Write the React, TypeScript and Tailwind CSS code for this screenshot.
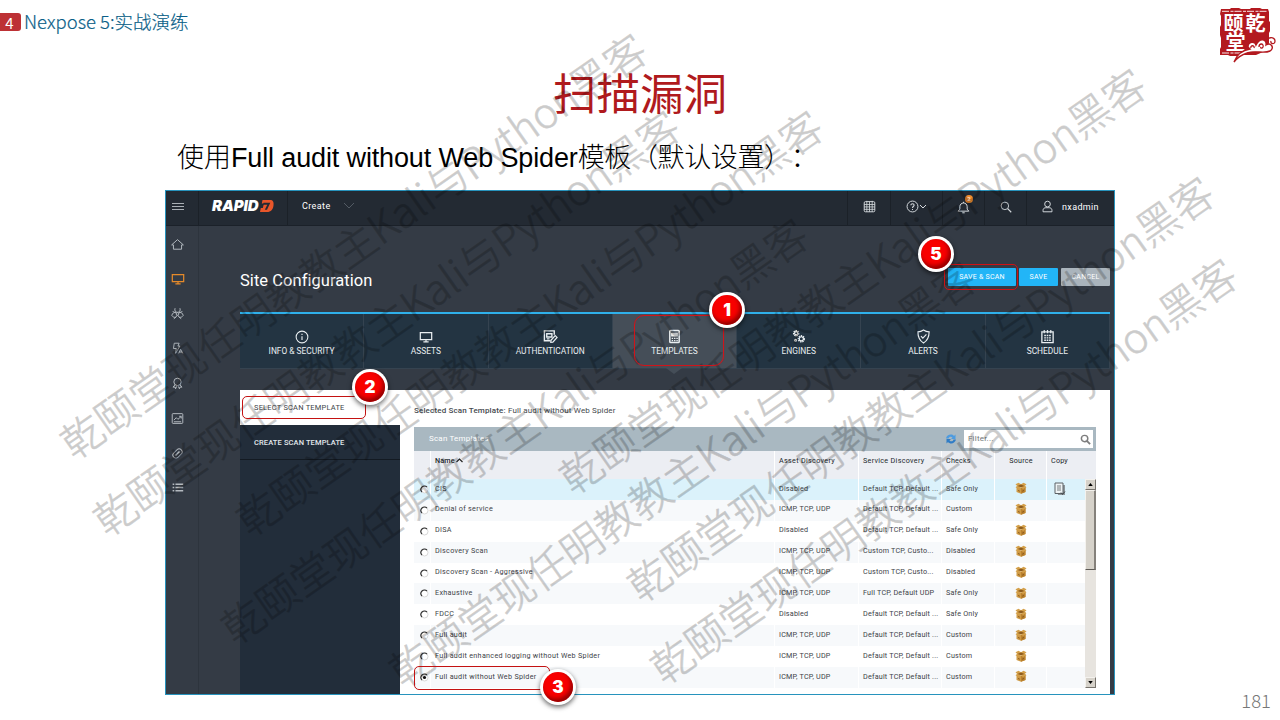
import React from "react";

type P = { children?: React.ReactNode; className?: string };

const Svg = ({ children, className = "" }: P) => (
  <svg viewBox="0 0 16 16" fill="none" stroke="currentColor" strokeWidth="1.2" className={`shrink-0 ${className}`}>
    {children}
  </svg>
);

const HomeIcon = () => (
  <Svg className="size-[13px]"><path d="M.8 8.500 8 2l7.200 6.500H13v5.300H3V8.500z" /></Svg>
);
const MonitorIcon = ({ className = "size-[14px]" }: P) => (
  <Svg className={className}><path d="M1.500 3h13v8h-13zM8 11v2.500M5 13.500h6" strokeWidth="1.400" /></Svg>
);
const BiohazardIcon = () => (
  <Svg className="size-[13px]">
    <circle cx="8" cy="8.500" r="1.600" />
    <path d="M5 1.500C4 4.500 5.500 6.500 8 6.500s4-2 3-5M1 10.500c.5-3 3-4.500 5.500-3.500M1 10.500c2.500 3.500 6 2.500 6.500-.5M15 10.500c-.5-3-3-4.500-5.500-3.500M15 10.500c-2.500 3.500-6 2.500-6.500-.5M3.500 14.500 6.500 12M12.500 14.500 9.500 12M2 5.500 5.500 7M14 5.500 10.500 7" />
  </Svg>
);
const BoltIcon = () => (
  <Svg className="size-[13px]"><path d="M4 1.500h6L8.500 5H11l-5.500 9 1-6H3zM9.500 14l2.300-5 2.700 5M10.500 12.300h3" strokeWidth="1.100" /></Svg>
);
const BadgeIcon = () => (
  <Svg className="size-[13px]">
    <circle cx="8" cy="6" r="4.500" />
    <path d="M5 9.500 2.500 12.500l2.500-.2.600 2.200L7 11.500M11 9.500l2.500 3-2.500-.2-.6 2.200L9 11.500" />
  </Svg>
);
const ReportIcon = () => (
  <Svg className="size-[13px]"><rect x="1.500" y="2" width="13" height="12" rx="1" /><path d="m3.500 10 3-3 2 2 4-3.500M10 5.300h2.600V8M3.500 12h9" /></Svg>
);
const ClipIcon = () => (
  <Svg className="size-[13px]">
    <g transform="rotate(-45 8 8)"><rect x="1.500" y="4.300" width="13" height="7.400" rx="3.700" /><path d="M4.500 8h7" strokeWidth="2" /></g>
  </Svg>
);
const ListIcon = () => (
  <Svg className="size-[13px]"><path d="M2 4h2M2 8h2M2 12h2M5.500 4H15M5.500 8H15M5.500 12H15" strokeWidth="1.700" /></Svg>
);
const InfoIcon = () => (
  <Svg className="size-[14px]"><circle cx="8" cy="8" r="6.700" /><path d="M8 7v4.500M8 4.300v1.400" strokeWidth="1.300" /></Svg>
);
const AuthIcon = () => (
  <Svg className="size-[15px]">
    <path d="M12 6V2H1.500v10.500H8M4 5h5.500v3.500H4zM4 10.500h3" strokeWidth="1.500" />
    <path d="m8.500 12 4.500-5 2 2-4.500 5-2.200.3z" strokeWidth="1.300" />
  </Svg>
);
const TemplateIcon = () => (
  <Svg className="size-[15px]">
    <rect x="3" y="1.500" width="10" height="13" rx="1" strokeWidth="1.600" />
    <path d="M5 4.500h6v3H5z" fill="currentColor" /><path d="M5 10h1.500M7.500 10H9M10 10h1.500M5 12.300h1.500M7.500 12.300H9M10 12.300h1.500" strokeWidth="1.400" />
  </Svg>
);
const EnginesIcon = () => (
  <Svg className="size-[15px]">
    <circle cx="5.500" cy="4.500" r="2.500" strokeWidth="1.900" strokeDasharray="1.300 .7" /><circle cx="5.500" cy="4.500" r="1.700" />
    <circle cx="11" cy="10.500" r="3" strokeWidth="2" strokeDasharray="1.400 .8" /><circle cx="11" cy="10.500" r="2.200" />
    <circle cx="5" cy="12" r="1" />
  </Svg>
);
const ShieldIcon = () => (
  <Svg className="size-[15px]"><path d="M8 1c2 1.500 4 2 6 2 0 5.500-1 9-6 12-5-3-6-6.500-6-12 2 0 4-.5 6-2z" /><path d="m5.300 7.500 2 2.200 3.800-4" /></Svg>
);
const ScheduleIcon = () => (
  <Svg className="size-[15px]">
    <path d="M2 3h12v11.500H2z" strokeWidth="1.400" />
    <path d="M4.500 1v3.500M8 1v3.500M11.500 1v3.500" strokeWidth="1.300" />
    <path d="M4.500 7h7M4.500 9.500h7M4.500 12h7" strokeWidth="1.500" strokeDasharray="1.800 .8" />
  </Svg>
);
const CalendarIcon = () => (
  <Svg className="size-[13px]"><rect x="1.500" y="2" width="13" height="12.500" rx="1.500" /><path d="M1.500 5.500h13M1.500 8.500h13M1.500 11.500h13M4.700 1v13.500M8 2v12.500M11.300 1v13.500" strokeWidth="1" /></Svg>
);

const BoxIcon = () => (
  <svg viewBox="0 0 12 12" className="size-[12px]">
    <path d="M1.500 4.500 6 6l4.500-1.500V10L6 11.700 1.500 10z" fill="#cf9a45" />
    <path d="M6 6v5.700L10.500 10V4.500z" fill="#bb822f" />
    <path d="M.5 2.300 3.500.8 6 2.300 8.500.8l3 1.500L9.800 4 11.500 5.300 8 7 6 5.200 4 7 .5 5.300 2.200 4z" fill="#d4a04a" />
    <path d="M2.500 3.900 6 2.400l3.500 1.500L6 5.200z" fill="#8d5c1e" />
    <path d="M3 8.500 4.800 9.200M7.200 9.200 9 8.500" stroke="#7a4d17" strokeWidth=".8" />
  </svg>
);

const CopyIcon = () => (
  <svg viewBox="0 0 12 14" className="h-[14px] w-[12px]" fill="none">
    <path d="M3 3h8v10H4z" fill="#8d9499" />
    <path d="M1 1h8v10.500H1z" fill="#eef3f5" stroke="#5c6266" />
    <path d="M3 4h4M3 6h4M3 8h4" stroke="#666d71" strokeWidth=".9" />
    <path d="m7 10.500 1.500 2 2.500-3" stroke="#454b4f" />
  </svg>
);

const sidebar = [HomeIcon, MonitorIcon, BiohazardIcon, BoltIcon, BadgeIcon, ReportIcon, ClipIcon, ListIcon];

const tabs: [string, React.ComponentType][] = [
  ["INFO & SECURITY", InfoIcon],
  ["ASSETS", MonitorIcon],
  ["AUTHENTICATION", AuthIcon],
  ["TEMPLATES", TemplateIcon],
  ["ENGINES", EnginesIcon],
  ["ALERTS", ShieldIcon],
  ["SCHEDULE", ScheduleIcon],
];

const rows = [
  ["CIS", "Disabled", "Default TCP, Default ...", "Safe Only"],
  ["Denial of service", "ICMP, TCP, UDP", "Default TCP, Default ...", "Custom"],
  ["DISA", "Disabled", "Default TCP, Default ...", "Safe Only"],
  ["Discovery Scan", "ICMP, TCP, UDP", "Custom TCP, Custo...", "Disabled"],
  ["Discovery Scan - Aggressive", "ICMP, TCP, UDP", "Custom TCP, Custo...", "Disabled"],
  ["Exhaustive", "ICMP, TCP, UDP", "Full TCP, Default UDP", "Safe Only"],
  ["FDCC", "Disabled", "Default TCP, Default ...", "Safe Only"],
  ["Full audit", "ICMP, TCP, UDP", "Default TCP, Default ...", "Custom"],
  ["Full audit enhanced logging without Web Spider", "ICMP, TCP, UDP", "Default TCP, Default ...", "Custom"],
  ["Full audit without Web Spider", "ICMP, TCP, UDP", "Default TCP, Default ...", "Custom"],
];

const marks = [
  "left-[64px] top-[446px]",
  "left-[97px] top-[523px]",
  "left-[240px] top-[523px]",
  "left-[225px] top-[631px]",
  "left-[393px] top-[674px]",
  "left-[563px] top-[481px]",
  "left-[631px] top-[589px]",
  "left-[654px] top-[671px]",
];

const Step = ({ n, className = "" }: { n: string; className?: string }) => (
  <div className={`absolute flex size-[36px] items-center justify-center rounded-full bg-white shadow-[0_2px_5px_rgba(0,0,0,0.6)] ${className}`}>
    <div className="flex size-[30px] items-center justify-center rounded-full bg-[#f80000] font-['Inter',sans-serif] text-[17px] leading-none font-black text-white shadow-[inset_-2px_-3px_4px_rgba(110,0,0,0.75)]">
      {n}
    </div>
  </div>
);

const GRID = "grid grid-cols-[16px_344px_84px_83px_53px_52px_1fr]";

const TopBar = () => (
  <div className="flex h-[35px] shrink-0 border-b border-[#1b2129] bg-[#232a33] text-[#d5dade]">
    <div className="flex w-[33px] items-center border-r border-[#1b2128] pl-[6px] pb-[3px]">
      <div className="flex flex-col gap-[2px]">
        <i className="h-px w-[12px] bg-[#a9afb5]" /><i className="h-px w-[12px] bg-[#a9afb5]" /><i className="h-px w-[12px] bg-[#a9afb5]" />
      </div>
    </div>
    <div className="flex w-[89px] items-center border-r border-[#1b2128] pb-[5px] pl-[13px]">
      <span className="w-[48px] font-['Inter',sans-serif] text-[15px] leading-none font-black tracking-[-0.1px] whitespace-nowrap text-white italic">RAPID</span>
      <svg viewBox="0 0 14 12" className="h-[12px] w-[14px]">
        <path d="M2.500 0H10c3 0 4 2 3.500 5.500C13 9.500 11 12 7 12H0l.8-4h2L4 3.500H1.800z" fill="#e8562a" />
        <path d="M3.500 2.800h6.800L7 9.800H4.800l2.500-5H3z" fill="#232a33" />
      </svg>
    </div>
    <div className="flex flex-1 items-center pb-[4px] pl-[14px]">
      <span className="text-[9px] leading-[10px] tracking-[0.4px] text-white">Create</span>
      <svg viewBox="0 0 12 8" className="ml-[12px] h-[8px] w-[12px]"><path d="m1 1 5 5 5-5" fill="none" stroke="#535b64" /></svg>
    </div>
    <div className="flex w-[43px] items-center justify-center border-l border-[#1b2128] pb-[3px]"><CalendarIcon /></div>
    <div className="flex w-[52px] items-center justify-center border-l border-[#1b2128] pb-[3px]">
      <Svg className="size-[13px]"><circle cx="8" cy="8" r="6.700" /><path d="M6 6.500C6 4 10 4 10 6.500 10 8 8 8 8 9.700M8 11v1.300" strokeWidth="1.300" /></Svg>
      <svg viewBox="0 0 8 6" className="h-[6px] w-[8px]"><path d="m1 1 3 3 3-3" fill="none" stroke="currentColor" /></svg>
    </div>
    <div className="relative flex w-[42px] items-center justify-center border-l border-[#1b2128] pb-[2px]">
      <Svg className="size-[13px]"><path d="M1.500 12.500h13L12.500 10V7c0-6-9-6-9 0v3zM8 1v1.500M6.500 14.500h3" /></Svg>
      <span className="absolute top-[4px] left-[22px] flex size-[8px] items-center justify-center rounded-full bg-[#ee8a2e] text-[6px] leading-none text-white">2</span>
    </div>
    <div className="flex w-[42px] items-center justify-center border-l border-[#1b2128] pb-[3px]">
      <Svg className="size-[12px]"><circle cx="6.500" cy="6.500" r="5" /><path d="m10.200 10.200 4.800 4.800" strokeWidth="1.500" /></Svg>
    </div>
    <div className="flex w-[88px] items-center border-l border-[#1b2128] pb-[3px] pl-[14px]">
      <Svg className="size-[13px]"><circle cx="8" cy="5" r="3.500" /><path d="M2.500 14.500V13c0-2.500 1.500-3.500 3.500-3.500h4c2 0 3.500 1 3.500 3.500v1.500z" /></Svg>
      <span className="ml-[8px] text-[9px] leading-[10px] tracking-[0.35px] text-white">nxadmin</span>
    </div>
  </div>
);

const TemplateTable = () => (
  <div className="ml-[14px] w-[682px] text-[7.200px] leading-none tracking-[0.2px] text-[#3c4247]">
    <div className="flex h-[24px] items-center bg-[#a9b8c1] pr-[3px] pl-[15px]">
      <span className="flex-1 text-[8px] text-white">Scan Templates</span>
      <svg viewBox="0 0 12 12" className="mr-[7px] size-[12px]">
        <path d="M1 5.500C1.500 2 6.500 0 9 3l1.500-1.500V6H6l1.500-1.500C6 3 4 3.500 3.500 5.500z" fill="#4d9be0" />
        <path d="M11 6.500C10.500 10 5.500 12 3 9l-1.500 1.500V6H6L4.500 7.500C6 9 8 8.500 8.500 6.500z" fill="#2f7cc6" />
      </svg>
      <div className="flex h-[18px] w-[129px] items-center justify-between bg-white pr-[2px] pl-[4px] text-[8px] text-[#70767a]">
        <span>Filter...</span>
        <svg viewBox="0 0 12 12" className="size-[11px]" fill="none" stroke="#7d7d7d" strokeWidth="1.600"><circle cx="5" cy="5" r="3.500" /><path d="m7.500 7.500 3.500 3.500" strokeWidth="2" /></svg>
      </div>
    </div>
    <div className={`${GRID} h-[28px] bg-[#eceef3] text-[#22282c] [&>span]:border-l [&>span]:border-white [&>span]:pt-[6px] [&>span]:pl-[4px]`}>
      <i />
      <span className="flex gap-[1px] font-medium">Name<svg viewBox="0 0 7 5" className="mt-[1px] h-[5px] w-[7px]"><path d="m.5 4 3-3 3 3" fill="none" stroke="#222" strokeWidth="1.200" /></svg></span>
      <span className="tracking-[0.32px]">Asset Discovery</span><span className="tracking-[0.3px]">Service Discovery</span><span>Checks</span>
      <span className="pr-[3px] text-center">Source</span><span>Copy</span>
    </div>
    <div className="flex">
      <div className="flex-1">
        {rows.map((r, i) => (
          <div
            key={r[0]}
            className={`${GRID} h-[20.9px] [&>span]:border-l [&>span]:border-white [&>span]:pt-[5.500px] [&>span]:pl-[4px] [&>span]:whitespace-nowrap ${i === 0 ? "bg-[#dbf2fb]" : i % 2 ? "bg-[#f7f9fb]" : "bg-white"}`}
          >
            <div className="flex justify-end pt-[6px] pr-[1px]">
              <svg viewBox="0 0 9 9" className="size-[9px]">
                <circle cx="4.500" cy="4.500" r="3.500" fill="#fff" stroke="#d8d8d8" />
                <path d="M2 7A3.500 3.500 0 0 1 7 2" fill="none" stroke="#333" strokeWidth="1.100" />
                {i === 9 && <circle cx="4.500" cy="4.500" r="1.600" fill="#111" />}
              </svg>
            </div>
            <span className="tracking-[0.3px]">{r[0]}</span><span>{r[1]}</span><span>{r[2]}</span><span>{r[3]}</span>
            <div className="flex items-center justify-center border-l border-white pb-[2px]"><BoxIcon /></div>
            <div className="flex items-center border-l border-white pl-[7px]">{i === 0 && <CopyIcon />}</div>
          </div>
        ))}
      </div>
      <div className="flex w-[11px] flex-col bg-[#e7e4df]">
        <div className="flex h-[11px] items-center justify-center border border-[#f4f2ee] border-r-[#77736d] border-b-[#77736d] bg-[#d6d2ca]">
          <svg viewBox="0 0 6 4" className="h-[3px] w-[5px]"><path d="M0 4h6L3 0z" /></svg>
        </div>
        <div className="h-[80px] border border-r-2 border-[#f4f2ee] border-r-[#85817b] border-b-[#5e5b56] bg-[#d6d2ca]" />
        <div className="flex-1" />
        <div className="flex h-[11px] items-center justify-center border border-[#f4f2ee] border-r-[#77736d] border-b-[#77736d] bg-[#d6d2ca]">
          <svg viewBox="0 0 6 4" className="h-[3px] w-[5px]"><path d="M0 0h6L3 4z" /></svg>
        </div>
      </div>
    </div>
  </div>
);

const Seal = () => (
  <svg viewBox="0 0 60 56" className="h-[56px] w-[60px]">
    <path transform="translate(2 0)" d="M2 2h9l1-1h8l2 1h9l1-1h9l2 1h6l1 3v9l1 1v9l-1 2v10l-2 6-4 3-7 3H24l-3 1H11l-2-1H1v-6l1-2v-9l-1-3v-8l1-2V9L1 7z" fill="#b3191f" />
    <path d="M5 4.300h45M5 46h22" stroke="#fff" strokeWidth=".9" strokeDasharray="7 1.500 3 1" />
    <g fill="#fff" fontFamily="'Noto Sans CJK SC', sans-serif" fontWeight="700" fontSize="20">
      <text x="6.500" y="23.500">颐</text><text x="28.500" y="23.500">乾</text><text x="8.500" y="43">堂</text>
    </g>
    <path d="M31 40c0-6 7-6 8-2 4-8 11-6 10 0 5-3 9 3 4 6-6 3-15-1-23 2-6 2-10 5-13 9 3-8 9-12 16-13z" fill="#fff" stroke="#b3191f" strokeWidth="1.400" />
    <path d="M34 41c-1-3 4-3 3 0M42 40c0-4 5-4 4 0-1 2-3 1-2 0M50 35c-1-5 8-6 8-1 0 4-5 3-4 0" fill="none" stroke="#b3191f" strokeWidth="1.300" />
  </svg>
);

export default function App() {
  return (
    <div className="relative flex h-[720px] w-[1280px] flex-col overflow-hidden bg-white font-['Roboto','Noto_Sans_CJK_SC',sans-serif]">
      <header className="flex h-[61px] shrink-0 items-start justify-between pr-[3px]">
        <div className="flex items-center pt-[9px]">
          <span className="mt-[2px] flex h-[18px] w-[21px] items-center justify-center rounded-r-[3px] bg-[#bd3135] pr-[2px] font-['Noto_Sans_CJK_SC',sans-serif] text-[15px] leading-none text-white">4</span>
          <span className="ml-[3px] font-['Noto_Sans_CJK_SC',sans-serif] text-[18.500px] leading-[24px] font-light whitespace-nowrap text-[#0b5f88] [-webkit-text-stroke:0.2px]">Nexpose 5:实战演练</span>
        </div>
        <div className="pt-[7px]"><Seal /></div>
      </header>
      <h1 className="h-[77px] shrink-0 text-center font-['Noto_Sans_CJK_SC',sans-serif] text-[43.500px] leading-[61px] text-[#b01a1d]">扫描漏洞</h1>
      <p className="h-[52px] shrink-0 pl-[177px] font-['Liberation_Sans','Noto_Sans_CJK_SC',sans-serif] text-[27px] leading-[40px] font-light whitespace-nowrap text-black [text-spacing-trim:space-all]">
        使用<span className="tracking-[-0.14px]">Full audit without Web Spider</span><span className="tracking-[-0.35px]">模板（默认设置）：</span>
      </p>

      <main className="ml-[165px] flex h-[505px] w-[950px] shrink-0 flex-col border border-[#2793bd] bg-[#343b45]">
        <TopBar />
        <div className="flex min-h-0 flex-1">
          <aside className="flex w-[33px] flex-col border-r border-[#2d343d] pt-[1px] text-[#b4bac0]">
            {sidebar.map((Icon, i) => (
              <div key={i} className={`flex h-[34.8px] items-center pl-[5px] ${i === 1 ? "text-[#e58a2a]" : ""}`}><Icon /></div>
            ))}
          </aside>
          <section className="flex flex-1 flex-col pl-[41px]">
            <div className="flex h-[86px] shrink-0 items-start justify-between pr-[4px]">
              <h2 className="pt-[45px] text-[16.500px] leading-[20px] tracking-[0.05px] text-white">Site Configuration</h2>
              <div className="flex gap-[3px] pt-[42px] text-[7px] leading-none tracking-[0.25px] text-white">
                <span className="flex h-[18px] w-[68px] items-center justify-center rounded-[1px] bg-[#22b5f7]">SAVE &amp; SCAN</span>
                <span className="flex h-[18px] w-[39px] items-center justify-center rounded-[1px] bg-[#22b5f7]">SAVE</span>
                <span className="flex h-[18px] w-[49px] items-center justify-center rounded-[1px] bg-[#aab4bc]">CANCEL</span>
              </div>
            </div>
            <nav className="mr-[4px] grid h-[57px] shrink-0 grid-cols-7 border-t-2 border-[#2fb0ea]">
              {tabs.map(([label, Icon], i) => (
                <div
                  key={label}
                  className={`relative flex flex-col items-center border-r border-b border-[#354350] pt-[15px] text-[8.400px] leading-none text-[#e9eef1] ${i === 3 ? "bg-[#454e58]" : "bg-[#233442]"}`}
                >
                  <div className="flex h-[15px] items-center"><Icon /></div>
                  <span className="mt-[3px]">{label}</span>
                  {i === 3 && (
                    <svg viewBox="0 0 16 6" className="absolute top-full left-1/2 h-[6px] w-[16px] -translate-x-1/2"><path d="M0 0h16L8 6z" fill="#454e58" /></svg>
                  )}
                </div>
              ))}
            </nav>
            <div className="mt-[21px] mr-[4px] flex min-h-0 flex-1">
              <div className="w-[160px] bg-[#222d3a] text-[7.500px] leading-none tracking-[0.2px]">
                <div className="flex h-[35px] items-center bg-white pl-[14px] text-[#3d4348]">SELECT SCAN TEMPLATE</div>
                <div className="flex h-[35px] items-center border-b border-[#131a22] pt-[1px] pl-[14px] font-medium tracking-[0.12px] text-[#e3e8ec]">CREATE SCAN TEMPLATE</div>
              </div>
              <div className="flex flex-1 flex-col bg-white">
                <p className="h-[37px] shrink-0 pt-[17px] pl-[14px] text-[8px] leading-none tracking-[0.15px] text-[#44494e]">
                  <span className="font-medium">Selected Scan Template:</span> Full audit without Web Spider
                </p>
                <TemplateTable />
              </div>
            </div>
          </section>
        </div>
      </main>
      <footer className="absolute right-[9px] bottom-[8px] font-['Noto_Sans_CJK_SC',sans-serif] text-[18.500px] leading-[24px] font-light text-[#777]">181</footer>

      {marks.map((pos) => (
        <div
          key={pos}
          className={`absolute h-0 origin-left -rotate-[35deg] font-['Noto_Sans_CJK_SC',sans-serif] text-[41.600px] leading-[0px] font-light whitespace-nowrap text-black opacity-20 [-webkit-text-stroke:0.6px] ${pos}`}
        >
          乾颐堂现任明教教主Kali与Python黑客
        </div>
      ))}

      <div className="absolute top-[264px] left-[944px] h-[26px] w-[74px] rounded-[5px] border border-[#d01214]" />
      <div className="absolute top-[315px] left-[634px] h-[51px] w-[90px] rounded-[10px] border border-[#d0141a] shadow-[0_0_1px_rgba(200,20,26,0.7)]" />
      <div className="absolute top-[396px] left-[242px] h-[23px] w-[124px] rounded-[5px] border border-[#c41212]" />
      <div className="absolute top-[666px] left-[414px] h-[24px] w-[136px] rounded-[5px] border border-[#c41212]" />

      <Step n="1" className="top-[292px] left-[709px]" />
      <Step n="2" className="top-[369px] left-[352px]" />
      <Step n="3" className="top-[669px] left-[540px]" />
      <Step n="5" className="top-[236px] left-[918px]" />
    </div>
  );
}
